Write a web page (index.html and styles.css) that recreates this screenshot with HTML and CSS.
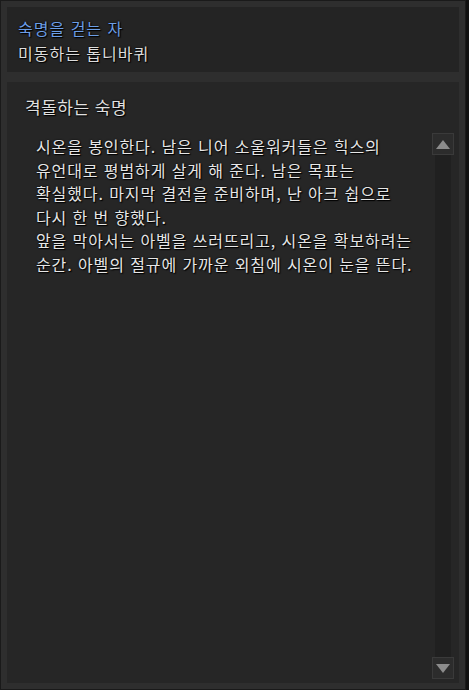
FILE: index.html
```html
<!DOCTYPE html>
<html lang="ko">

<head>
    <meta charset="UTF-8">
    <meta name="viewport" content="width=device-width, initial-scale=1.0">
    <title>격돌하는 숙명</title>
    <link rel="stylesheet" href="styles.css">
</head>

<body>
    <div class="frame">
        <div class="header">
            <div class="quest-group">숙명을 걷는 자</div>
            <div class="quest-chapter">미동하는 톱니바퀴</div>
        </div>

        <div class="content">
            <div class="title">격돌하는 숙명</div>
            <div class="body">
                <div class="text">
                    시온을 봉인한다. 남은 니어 소울워커들은 힉스의<br>
                    유언대로 평범하게 살게 해 준다. 남은 목표는<br>
                    확실했다. 마지막 결전을 준비하며, 난 아크 쉽으로<br>
                    다시 한 번 향했다.<br>
                    앞을 막아서는 아벨을 쓰러뜨리고, 시온을 확보하려는<br>
                    순간. 아벨의 절규에 가까운 외침에 시온이 눈을 뜬다.
                </div>
                <div class="scrollbar">
                    <div class="scroll-btn">
                        <svg width="14" height="9" viewBox="0 0 14 9"><polygon points="7,0 14,9 0,9" fill="#8c8c8c"/></svg>
                    </div>
                    <div class="scroll-track"></div>
                    <div class="scroll-btn">
                        <svg width="14" height="9" viewBox="0 0 14 9"><polygon points="0,0 14,0 7,9" fill="#8c8c8c"/></svg>
                    </div>
                </div>
            </div>
        </div>
    </div>
</body>

</html>
```

FILE: styles.css
```css
* {
    margin: 0;
    padding: 0;
    box-sizing: border-box;
}

body, html {
    height: 100%;
    background-color: #101010;
    font-family: "Noto Sans CJK KR", "Noto Sans", sans-serif;
}

.frame {
    height: 690px;
    width: 466px;
    background-color: #2e2e2e;
    border: 1px solid #1a1a1a;
    padding: 6px;
    display: flex;
    flex-direction: column;
    gap: 10px;
}

.header {
    height: 65px;
    background-color: #242424;
    padding: 9px 11px 0 11px;
    font-size: 16px;
    line-height: 25px;
    letter-spacing: 1px;
    text-shadow: 0 0 2px #000, 1px 1px 1px #000;
}

.quest-group {
    color: #6d9ee6;
}

.quest-chapter {
    color: #dcdcdc;
}

.content {
    flex-grow: 1;
    background-color: #262626;
    display: flex;
    flex-direction: column;
    padding: 12px 5px 4px 18px;
}

.title {
    font-size: 17px;
    line-height: 26px;
    letter-spacing: 0.5px;
    color: #e0e0e0;
    text-shadow: 0 0 2px #000, 1px 1px 1px #000;
}

.body {
    flex-grow: 1;
    display: flex;
    margin-top: 13px;
}

.text {
    flex-grow: 1;
    padding-left: 11px;
    padding-top: 2px;
    font-size: 16px;
    line-height: 23.5px;
    letter-spacing: 0.9px;
    color: #e6e6e6;
    text-shadow: 0 0 2px #000, 1px 1px 1px #000;
}

.scrollbar {
    width: 22px;
    display: flex;
    flex-direction: column;
}

.scroll-btn {
    height: 22px;
    background-color: #2c2c2c;
    border: 1px solid #3a3a3a;
    display: flex;
    justify-content: center;
    align-items: center;
}

.scroll-track {
    flex-grow: 1;
    background-color: #202020;
    margin: 0 3px;
}
```
